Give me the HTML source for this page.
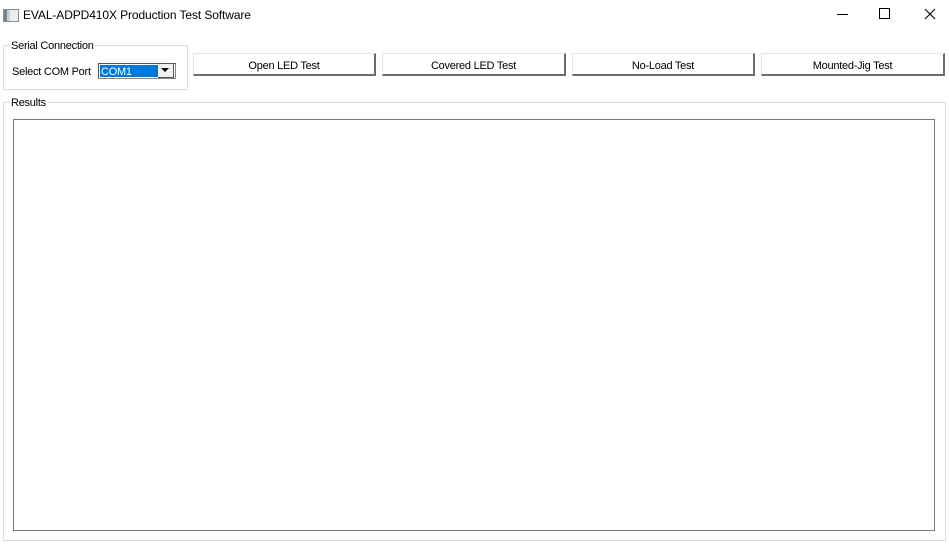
<!DOCTYPE html>
<html><head><style>
body{margin:0;width:949px;height:550px;background:#fff;font-family:"Liberation Sans",sans-serif;font-size:11px;letter-spacing:-0.25px;color:#000;position:relative;overflow:hidden}
.a{position:absolute}
.btn{position:absolute;top:53px;height:20px;border-right:2px solid #6d6d6d;border-bottom:2px solid #6d6d6d;border-top:1px solid #e6e6e6;border-left:1px solid #e6e6e6;text-align:center;line-height:24px;font-size:11px;box-sizing:content-box;background:#fff}
.grp{position:absolute;border:1px solid #dcdcdc}
.lg{position:absolute;background:#fff;padding:0 1px}
</style></head><body>
<div class="a" style="left:3px;top:9px;width:14px;height:11px;background:linear-gradient(90deg,#6b8a8a 0 3px,#ccd 3px 6px,#eee 6px);border:1px solid #889"></div>
<div class="a" style="left:23px;top:8px;font-size:12px;letter-spacing:-0.1px">EVAL-ADPD410X Production Test Software</div>
<div class="a" style="left:837px;top:14px;width:11px;height:1px;background:#000"></div>
<div class="a" style="left:879px;top:8px;width:9px;height:9px;border:1px solid #000"></div>
<svg class="a" style="left:924px;top:8px" width="12" height="12"><path d="M1 1L11 11M11 1L1 11" stroke="#000" stroke-width="1.1"/></svg>

<div class="grp" style="left:3px;top:45px;width:183px;height:43px"></div>
<div class="lg" style="left:10px;top:40px">Serial Connection</div>
<div class="a" style="left:12px;top:66px">Select COM Port</div>
<div class="a" style="left:98px;top:63px;width:76px;height:14px;border:1px solid #888;border-top-color:#555;border-left-color:#555;background:#fff"></div>
<div class="a" style="left:100px;top:65px;width:57px;height:12px;background:#0078d7;color:#fff;line-height:14px;padding-left:1px">COM1</div>
<div class="a" style="left:158px;top:64px;width:15px;height:13px;border-right:1px solid #555;border-bottom:1px solid #555;background:#f0f0f0"></div>
<svg class="a" style="left:161px;top:68px" width="9" height="5"><path d="M0 0H8L4 4Z" fill="#000"/></svg>

<div class="btn" style="left:193px;width:180px">Open LED Test</div>
<div class="btn" style="left:382px;width:181px">Covered LED Test</div>
<div class="btn" style="left:572px;width:180px">No-Load Test</div>
<div class="btn" style="left:761px;width:181px">Mounted-Jig Test</div>

<div class="grp" style="left:3px;top:102px;width:941px;height:437px"></div>
<div class="lg" style="left:10px;top:97px">Results</div>
<div class="a" style="left:13px;top:119px;width:920px;height:410px;border:1px solid #7a7a7a"></div>
</body></html>
